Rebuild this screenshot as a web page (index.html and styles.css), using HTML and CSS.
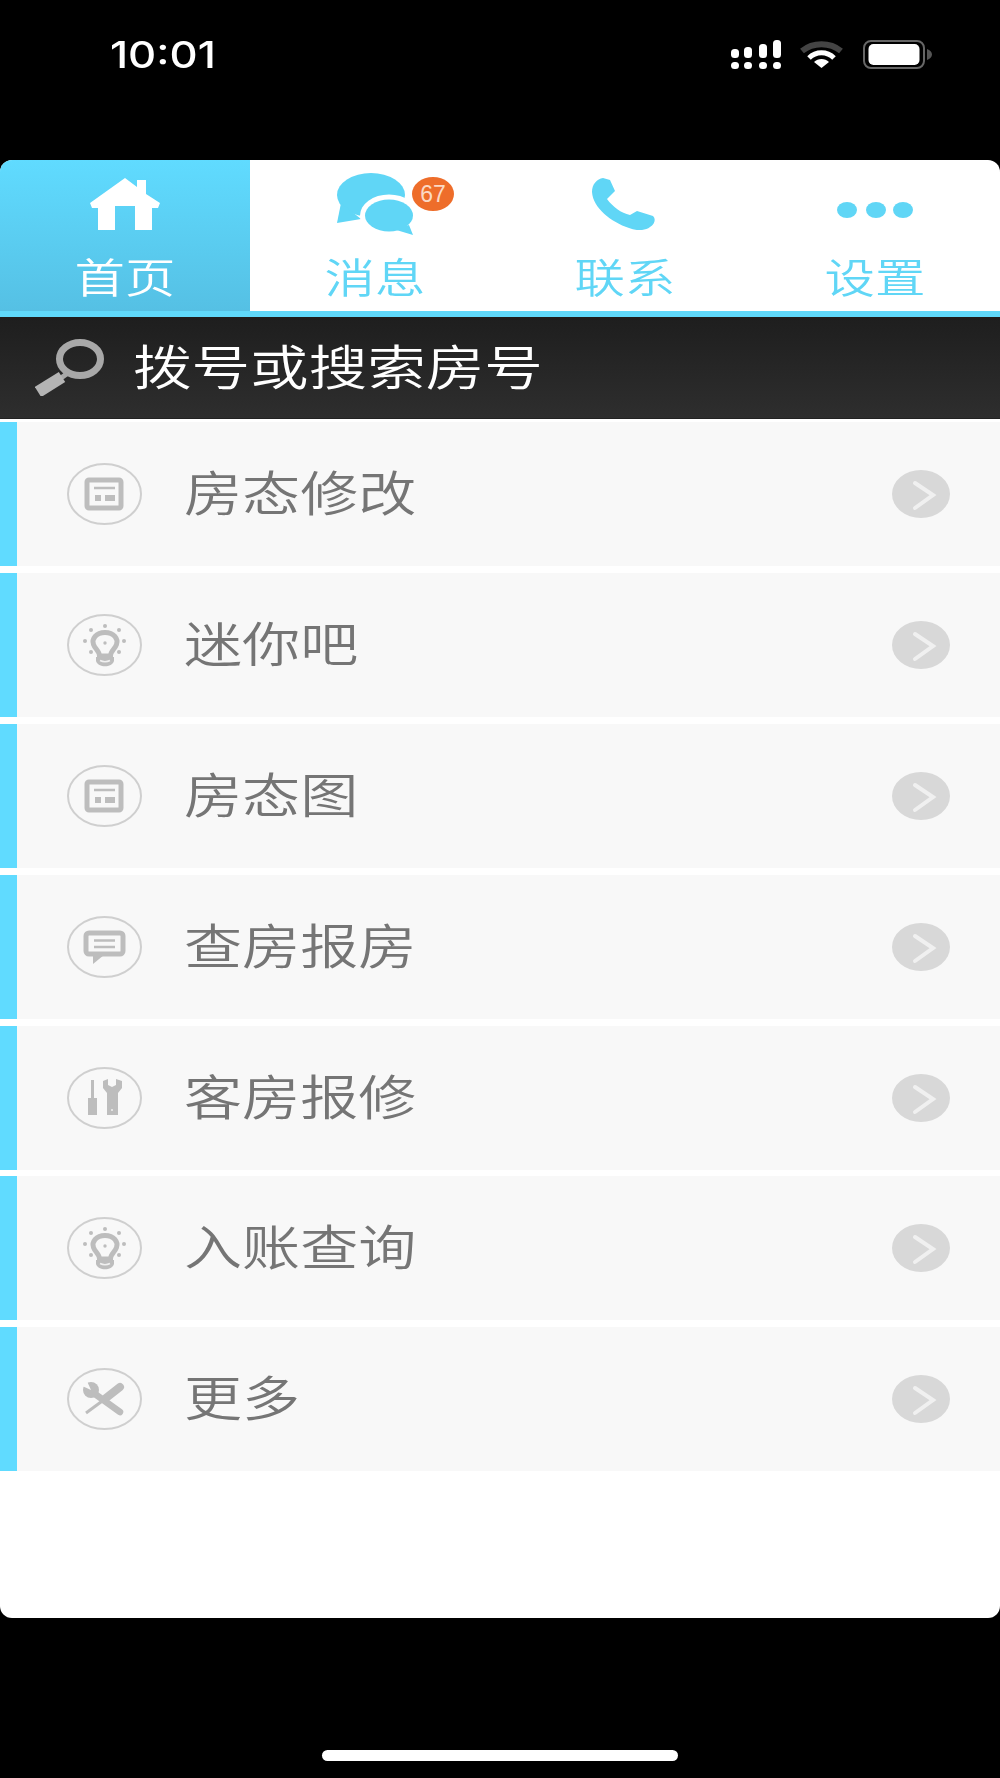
FILE: index.html
```html
<!DOCTYPE html>
<html>
<head>
    <meta charset="UTF-8" />
    <meta name="viewport" content="width=device-width, initial-scale=1.0">
    <title>首页</title>
    <link rel="stylesheet" href="styles.css">
</head>

<body>
    <div class="screen">
        <div class="status-bar">
            <div class="status-time">10:01</div>
            <div class="status-icons">
                <svg class="signal-icon" width="51" height="29" viewBox="0 0 51 29">
                    <g fill="#fff">
                        <rect x="0" y="9" width="8" height="9" rx="3.5" />
                        <rect x="0" y="22" width="8" height="7" rx="3.5" />
                        <rect x="13" y="7" width="8" height="11" rx="3.5" />
                        <rect x="13" y="22" width="8" height="7" rx="3.5" />
                        <rect x="28" y="4" width="8" height="14" rx="3.5" />
                        <rect x="28" y="22" width="8" height="7" rx="3.5" />
                        <rect x="42" y="0" width="8" height="18" rx="3.5" />
                        <rect x="42" y="22" width="8" height="7" rx="3.5" />
                    </g>
                </svg>
                <svg class="wifi-icon" width="43" height="27" viewBox="0 0 43 27">
                    <path d="M2 10 C13 1 30 1 41 10" fill="none" stroke="#444" stroke-width="6" />
                    <path d="M9 17 C16 10 27 10 34 17" fill="none" stroke="#fff" stroke-width="5" />
                    <path d="M14 21 C18 17 25 17 29 21 L21.5 27 Z" fill="#fff" />
                </svg>
                <svg class="battery-icon" width="69" height="29" viewBox="0 0 69 29">
                    <rect x="1" y="1" width="60" height="27" rx="7" fill="none" stroke="#666" stroke-width="2" />
                    <rect x="5.5" y="4" width="51" height="21" rx="5" fill="#fff" />
                    <path d="M64 9 C67 10 69 12 69 14.5 C69 17 67 19 64 20 Z" fill="#555" />
                </svg>
            </div>
        </div>

        <div class="card">
            <div class="tabs">
                <div class="tab active">
                    <div class="tab-icon">
                        <svg width="70" height="52" viewBox="0 0 70 52">
                            <path d="M35 0 L47 9 V2 H56 V16 L70 25 L68 30 H62 V52 H45 V28 H25 V52 H8 V30 H2 L0 25 Z" fill="#fff" />
                        </svg>
                    </div>
                    <span class="tab-label">首页</span>
                </div>
                <div class="tab">
                    <div class="tab-icon">
                        <svg width="76" height="62" viewBox="0 0 76 62">
                            <ellipse cx="34" cy="22" rx="34" ry="22" fill="#60d6f6" />
                            <path d="M4 30 L0 50 L24 46 Z" fill="#60d6f6" />
                            <ellipse cx="52" cy="42.5" rx="29" ry="21" fill="#fff" />
                            <ellipse cx="52" cy="42.5" rx="24" ry="16" fill="#60d6f6" />
                            <path d="M56 56 L76 62 L72 52 Z" fill="#60d6f6" />
                        </svg>
                        <span class="badge"><span class="badge-num">67</span></span>
                    </div>
                    <span class="tab-label">消息</span>
                </div>
                <div class="tab">
                    <div class="tab-icon phone-icon">
                        <svg width="65" height="52" viewBox="0 0 65 52">
                            <path d="M1 14 C1 6 6 1 12 0 L19 2 L24 13 L16 21 C22 29 30 35 39 37 L46 33 L62 38 C65 41 64 46 59 49 C54 53 45 53 38 50 C20 44 2 30 1 14 Z" fill="#60d6f6" />
                        </svg>
                    </div>
                    <span class="tab-label">联系</span>
                </div>
                <div class="tab">
                    <div class="tab-icon">
                        <svg width="76" height="64" viewBox="0 0 76 64">
                            <ellipse cx="10" cy="38" rx="10" ry="8" fill="#60d6f6" />
                            <ellipse cx="39" cy="38" rx="10" ry="8" fill="#60d6f6" />
                            <ellipse cx="66" cy="38" rx="10" ry="8" fill="#60d6f6" />
                        </svg>
                    </div>
                    <span class="tab-label">设置</span>
                </div>
            </div>

            <div class="search-bar">
                <svg class="search-icon" width="70" height="57" viewBox="0 0 70 57">
                    <ellipse cx="45" cy="20" rx="20.5" ry="16.5" fill="none" stroke="#a8a8a8" stroke-width="7" />
                    <path d="M33 34 L26 39" stroke="#a8a8a8" stroke-width="5" />
                    <path d="M27 38 L3 53" stroke="#b4b4b4" stroke-width="12" />
                </svg>
                <span class="search-text">拨号或搜索房号</span>
            </div>

            <div class="menu">
                <div class="menu-row">
                    <svg class="row-icon" width="75" height="62" viewBox="0 0 75 62">
                        <ellipse class="ring" cx="37.5" cy="31" rx="36.5" ry="30" />
                        <rect class="line" x="20" y="17" width="34" height="28" rx="2" />
                        <path class="line thin" d="M27 25 H48" />
                        <rect class="solid" x="28" y="32" width="6" height="6" />
                        <rect class="solid" x="38" y="32" width="10" height="6" />
                    </svg>
                    <span class="row-text">房态修改</span>
                    <svg class="row-arrow" width="58" height="48" viewBox="0 0 58 48">
                        <ellipse cx="29" cy="24" rx="29" ry="24" fill="#d8d8d8" />
                        <path d="M23 13 L41 25 L23 38" fill="none" stroke="#f0f0f0" stroke-width="4" stroke-linecap="round" />
                    </svg>
                </div>
                <div class="menu-row">
                    <svg class="row-icon" width="75" height="62" viewBox="0 0 75 62">
                        <ellipse class="ring" cx="37.5" cy="31" rx="36.5" ry="30" />
                        <path class="line" d="M38 18.5 C29 18.5 24.5 25 26.5 30.5 C28 35 32.5 37 32.5 42 H43.5 C43.5 37 48 35 49.5 30.5 C51.5 25 47 18.5 38 18.5 Z" />
                        <path class="solid" d="M29 43 H47 V47 C45 54 31 54 29 47 Z" />
                        <path d="M33 46.5 C36 48 40 48 43 46.5" fill="none" stroke="#f0f0f0" stroke-width="1.5" />
                        <circle class="solid" cx="38" cy="29" r="1.7" />
                        <circle class="solid" cx="38" cy="12" r="2" />
                        <circle class="solid" cx="24" cy="16" r="2" />
                        <circle class="solid" cx="52" cy="16" r="2" />
                        <circle class="solid" cx="18" cy="27" r="2" />
                        <circle class="solid" cx="57" cy="27" r="2" />
                        <circle class="solid" cx="24" cy="38" r="2" />
                        <circle class="solid" cx="52" cy="38" r="2" />
                    </svg>
                    <span class="row-text">迷你吧</span>
                    <svg class="row-arrow" width="58" height="48" viewBox="0 0 58 48">
                        <ellipse cx="29" cy="24" rx="29" ry="24" fill="#d8d8d8" />
                        <path d="M23 13 L41 25 L23 38" fill="none" stroke="#f0f0f0" stroke-width="4" stroke-linecap="round" />
                    </svg>
                </div>
                <div class="menu-row">
                    <svg class="row-icon" width="75" height="62" viewBox="0 0 75 62">
                        <ellipse class="ring" cx="37.5" cy="31" rx="36.5" ry="30" />
                        <rect class="line" x="20" y="17" width="34" height="28" rx="2" />
                        <path class="line thin" d="M27 25 H48" />
                        <rect class="solid" x="28" y="32" width="6" height="6" />
                        <rect class="solid" x="38" y="32" width="10" height="6" />
                    </svg>
                    <span class="row-text">房态图</span>
                    <svg class="row-arrow" width="58" height="48" viewBox="0 0 58 48">
                        <ellipse cx="29" cy="24" rx="29" ry="24" fill="#d8d8d8" />
                        <path d="M23 13 L41 25 L23 38" fill="none" stroke="#f0f0f0" stroke-width="4" stroke-linecap="round" />
                    </svg>
                </div>
                <div class="menu-row">
                    <svg class="row-icon" width="75" height="62" viewBox="0 0 75 62">
                        <ellipse class="ring" cx="37.5" cy="31" rx="36.5" ry="30" />
                        <rect class="line" x="19" y="17" width="37" height="21" rx="3" />
                        <path class="solid" d="M26 39 V48 L37 39 Z" />
                        <path class="line thin" d="M27 24.5 H48 M27 31 H48" />
                    </svg>
                    <span class="row-text">查房报房</span>
                    <svg class="row-arrow" width="58" height="48" viewBox="0 0 58 48">
                        <ellipse cx="29" cy="24" rx="29" ry="24" fill="#d8d8d8" />
                        <path d="M23 13 L41 25 L23 38" fill="none" stroke="#f0f0f0" stroke-width="4" stroke-linecap="round" />
                    </svg>
                </div>
                <div class="menu-row">
                    <svg class="row-icon" width="75" height="62" viewBox="0 0 75 62">
                        <ellipse class="ring" cx="37.5" cy="31" rx="36.5" ry="30" />
                        <path class="solid" d="M24 13 H27 V31 H30 V48 H21 V31 H24 Z" />
                        <path class="solid" d="M36 14 L41 12 V18 L45 20 L49 18 V12 L55 14 V21 L51 26 V48 H40 V26 L36 21 Z" />
                        <circle cx="45" cy="43" r="1" fill="#f0f0f0" />
                    </svg>
                    <span class="row-text">客房报修</span>
                    <svg class="row-arrow" width="58" height="48" viewBox="0 0 58 48">
                        <ellipse cx="29" cy="24" rx="29" ry="24" fill="#d8d8d8" />
                        <path d="M23 13 L41 25 L23 38" fill="none" stroke="#f0f0f0" stroke-width="4" stroke-linecap="round" />
                    </svg>
                </div>
                <div class="menu-row">
                    <svg class="row-icon" width="75" height="62" viewBox="0 0 75 62">
                        <ellipse class="ring" cx="37.5" cy="31" rx="36.5" ry="30" />
                        <path class="line" d="M38 18.5 C29 18.5 24.5 25 26.5 30.5 C28 35 32.5 37 32.5 42 H43.5 C43.5 37 48 35 49.5 30.5 C51.5 25 47 18.5 38 18.5 Z" />
                        <path class="solid" d="M29 43 H47 V47 C45 54 31 54 29 47 Z" />
                        <path d="M33 46.5 C36 48 40 48 43 46.5" fill="none" stroke="#f0f0f0" stroke-width="1.5" />
                        <circle class="solid" cx="38" cy="29" r="1.7" />
                        <circle class="solid" cx="38" cy="12" r="2" />
                        <circle class="solid" cx="24" cy="16" r="2" />
                        <circle class="solid" cx="52" cy="16" r="2" />
                        <circle class="solid" cx="18" cy="27" r="2" />
                        <circle class="solid" cx="57" cy="27" r="2" />
                        <circle class="solid" cx="24" cy="38" r="2" />
                        <circle class="solid" cx="52" cy="38" r="2" />
                    </svg>
                    <span class="row-text">入账查询</span>
                    <svg class="row-arrow" width="58" height="48" viewBox="0 0 58 48">
                        <ellipse cx="29" cy="24" rx="29" ry="24" fill="#d8d8d8" />
                        <path d="M23 13 L41 25 L23 38" fill="none" stroke="#f0f0f0" stroke-width="4" stroke-linecap="round" />
                    </svg>
                </div>
                <div class="menu-row">
                    <svg class="row-icon" width="75" height="62" viewBox="0 0 75 62">
                        <ellipse class="ring" cx="37.5" cy="31" rx="36.5" ry="30" />
                        <path class="line tool-shaft" d="M38 31 L19 45" />
                        <path class="line tool-grip" d="M53 19 L39 30" />
                        <path class="line tool-stem" d="M28 26 L53 44" />
                        <circle class="solid" cx="24" cy="22" r="8" />
                        <path d="M24 22 L13 17 L19 11 Z" fill="#f8f8f8" />
                    </svg>
                    <span class="row-text">更多</span>
                    <svg class="row-arrow" width="58" height="48" viewBox="0 0 58 48">
                        <ellipse cx="29" cy="24" rx="29" ry="24" fill="#d8d8d8" />
                        <path d="M23 13 L41 25 L23 38" fill="none" stroke="#f0f0f0" stroke-width="4" stroke-linecap="round" />
                    </svg>
                </div>
            </div>
        </div>

        <div class="home-bar"></div>
    </div>
</body>
</html>
```

FILE: styles.css
```css
* {
    margin: 0;
    padding: 0;
    box-sizing: border-box;
    font-family: "Noto Sans CJK SC", "Liberation Sans", sans-serif;
}

body {
    background-color: #000;
}

.screen {
    height: 1778px;
    display: flex;
    flex-direction: column;
    overflow: hidden;
}

/* status bar */
.status-bar {
    height: 160px;
    flex-shrink: 0;
    padding: 40px 68px 0 110px;
    display: flex;
    justify-content: space-between;
    align-items: flex-start;
}

.status-time {
    font-family: "Inter", "Liberation Sans", sans-serif;
    font-size: 37px;
    font-weight: 500;
    line-height: 29px;
    color: #fff;
    transform: scaleX(1.18);
    transform-origin: left center;
}

.status-icons {
    display: flex;
    align-items: flex-start;
    gap: 18px;
}

.wifi-icon {
    margin-top: 1px;
}

.battery-icon {
    margin-left: 2px;
}

/* main card */
.card {
    height: 1458px;
    flex-shrink: 0;
    background-color: #fff;
    border-radius: 12px;
    overflow: hidden;
}

.tabs {
    height: 157px;
    display: flex;
    border-bottom: 6px solid #60d9fb;
}

.tab {
    flex: 1;
    display: flex;
    flex-direction: column;
    align-items: center;
    color: #60d6f6;
}

.tab.active {
    background: linear-gradient(#60dbff, #55c0e4);
    color: #fff;
}

.tab-icon {
    position: relative;
    height: 64px;
    margin-top: 12px;
    display: flex;
    align-items: center;
    justify-content: center;
}

.phone-icon {
    margin-right: 3px;
}

.tab-label {
    margin-top: 17px;
    font-size: 41px;
    font-weight: 350;
    line-height: 44px;
    transform: scaleX(1.23);
}

.badge {
    position: absolute;
    top: 5px;
    left: 75px;
    width: 42px;
    height: 34px;
    border-radius: 50%;
    background-color: #ee6d2a;
    display: flex;
    align-items: center;
    justify-content: center;
}

.badge-num {
    font-family: "Liberation Sans", sans-serif;
    font-size: 23px;
    line-height: 34px;
    color: #fbd9c4;
}

/* search */
.search-bar {
    height: 102px;
    display: flex;
    align-items: center;
    padding-left: 35px;
    background: linear-gradient(#1e1e1e, #2e2e2e);
    border-bottom: 1px solid #222;
}

.search-icon {
    flex-shrink: 0;
    filter: blur(0.5px);
}

.search-text {
    margin: 0 0 8px 28px;
    font-size: 48px;
    font-weight: 350;
    line-height: 56px;
    color: #fff;
    transform: scaleX(1.22);
    transform-origin: left center;
}

/* menu list */
.menu {
    margin-top: 3px;
    display: flex;
    flex-direction: column;
    gap: 6.9px;
}

.menu-row {
    height: 144px;
    display: flex;
    align-items: center;
    padding: 0 50px;
    background-color: #f8f8f8;
    border-left: 17px solid #60dbff;
}

.row-icon {
    flex-shrink: 0;
    filter: blur(0.7px);
}

.row-icon .ring {
    fill: none;
    stroke: #cfcfcf;
    stroke-width: 2;
}

.row-icon .line {
    fill: none;
    stroke: #bdbdbd;
    stroke-width: 5;
}

.row-icon .thin {
    stroke-width: 2.5;
}

.row-icon .tool-shaft {
    stroke-width: 3;
}

.row-icon .tool-grip {
    stroke-width: 8;
    stroke-linecap: round;
}

.row-icon .tool-stem {
    stroke-width: 6.5;
    stroke-linecap: round;
}

.row-icon .solid {
    fill: #bdbdbd;
}

.row-text {
    margin: 0 0 8px 42px;
    font-size: 48px;
    font-weight: 350;
    line-height: 56px;
    color: #757575;
    transform: scaleX(1.21);
    transform-origin: left center;
}

.row-arrow {
    margin-left: auto;
    flex-shrink: 0;
    filter: blur(0.5px);
}

.home-bar {
    width: 356px;
    height: 11px;
    margin: 132px auto 0;
    border-radius: 6px;
    background-color: #fff;
}
```
